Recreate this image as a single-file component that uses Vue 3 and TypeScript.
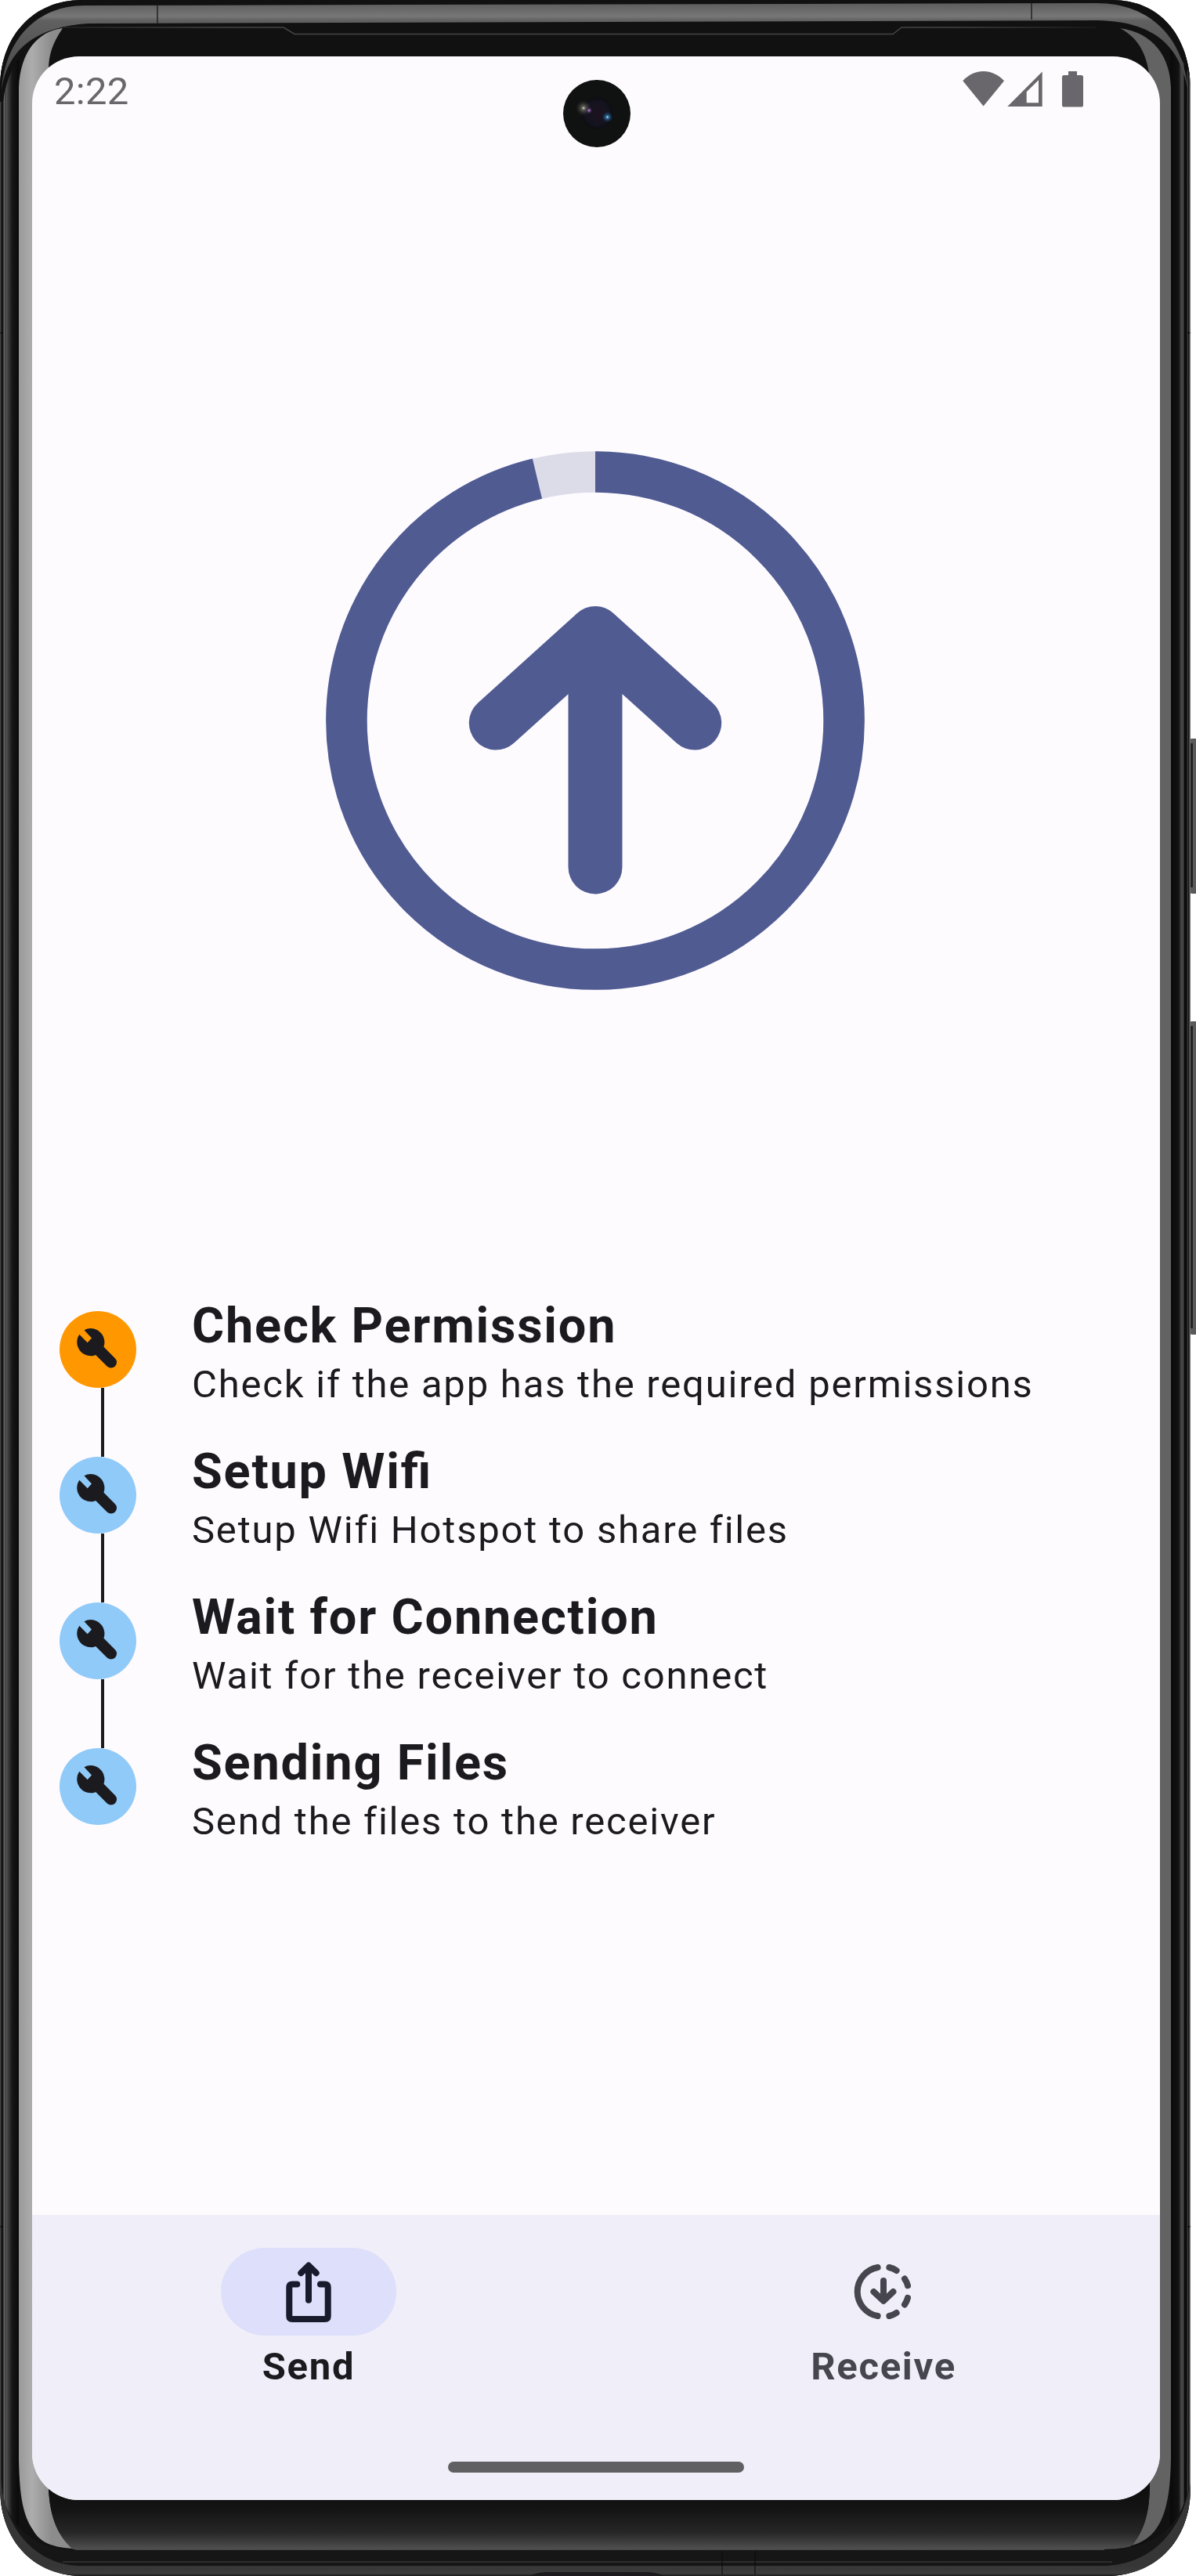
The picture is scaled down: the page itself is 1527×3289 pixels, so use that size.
<script setup lang="ts">
interface Step {
  title: string
  detail: string
  active: boolean
}

const steps: Step[] = [
  { title: 'Check Permission', detail: 'Check if the app has the required permissions', active: true },
  { title: 'Setup Wifi', detail: 'Setup Wifi Hotspot to share files', active: false },
  { title: 'Wait for Connection', detail: 'Wait for the receiver to connect', active: false },
  { title: 'Sending Files', detail: 'Send the files to the receiver', active: false },
]
</script>

<template>
  <div class="device">
    <svg class="frame" width="1527" height="3289" viewBox="0 0 1527 3289" aria-hidden="true">
      <defs>
        <linearGradient id="metal" x1="0" y1="0" x2="0" y2="1">
          <stop offset="0" stop-color="#5c5c5c" />
          <stop offset="0.15" stop-color="#777" />
          <stop offset="0.2" stop-color="#606060" />
          <stop offset="1" stop-color="#444" />
        </linearGradient>
        <linearGradient id="leftSide" gradientUnits="userSpaceOnUse" x1="0" y1="0" x2="24" y2="0">
          <stop offset="0" stop-color="#555" />
          <stop offset="0.08" stop-color="#151515" />
          <stop offset="0.17" stop-color="#151515" />
          <stop offset="0.22" stop-color="#808080" />
          <stop offset="0.27" stop-color="#333" />
          <stop offset="0.31" stop-color="#555" />
          <stop offset="0.65" stop-color="#161616" />
          <stop offset="1" stop-color="#0a0a0a" />
        </linearGradient>
        <linearGradient id="rightSide" gradientUnits="userSpaceOnUse" x1="1494" y1="0" x2="1520" y2="0">
          <stop offset="0" stop-color="#0a0a0a" />
          <stop offset="0.42" stop-color="#121212" />
          <stop offset="0.55" stop-color="#484848" />
          <stop offset="0.66" stop-color="#404040" />
          <stop offset="0.7" stop-color="#080808" />
          <stop offset="0.82" stop-color="#111" />
          <stop offset="0.86" stop-color="#444" />
          <stop offset="0.9" stop-color="#111" />
          <stop offset="0.96" stop-color="#555" />
          <stop offset="1" stop-color="#888" />
        </linearGradient>
        <linearGradient id="glassLeft" gradientUnits="userSpaceOnUse" x1="24" y1="0" x2="66" y2="0">
          <stop offset="0" stop-color="#999" />
          <stop offset="0.4" stop-color="#adadad" />
          <stop offset="1" stop-color="#8c8c8c" />
        </linearGradient>
        <linearGradient id="chin" x1="0" y1="0" x2="0" y2="1">
          <stop offset="0" stop-color="#0d0d0d" />
          <stop offset="0.4" stop-color="#141414" />
          <stop offset="0.75" stop-color="#272727" />
          <stop offset="1" stop-color="#505050" />
        </linearGradient>
        <linearGradient id="rim" gradientUnits="userSpaceOnUse" x1="0" y1="3276" x2="0" y2="3289">
          <stop offset="0" stop-color="#363636" />
          <stop offset="0.75" stop-color="#3c3c3c" />
          <stop offset="1" stop-color="#1a1a1a" />
        </linearGradient>
        <linearGradient id="notchLine" gradientUnits="userSpaceOnUse" x1="80" y1="0" x2="1420" y2="0">
          <stop offset="0" stop-color="#222" />
          <stop offset="0.15" stop-color="#444" />
          <stop offset="0.85" stop-color="#444" />
          <stop offset="1" stop-color="#151515" />
        </linearGradient>
        <clipPath id="body">
          <path d="M0 108C2 44 44 0 104 0H1420C1480 0 1518 44 1520 112V3180C1518 3246 1474 3289 1412 3289H106C44 3289 2 3246 0 3180Z" />
        </clipPath>
      </defs>

      <g>
        <rect x="1516" y="916" width="20" height="116" rx="5" fill="none" />
        <rect x="1517" y="943" width="14" height="198" rx="5" fill="#5a5a5a" />
        <rect x="1518" y="949" width="5" height="184" fill="#222" />
        <rect x="1517" y="1304" width="14" height="400" rx="5" fill="#5a5a5a" />
        <rect x="1518" y="1310" width="5" height="386" fill="#222" />
      </g>

      <g clip-path="url(#body)">
        <rect width="1527" height="3289" fill="#111" />
        <rect y="0" width="24" height="3289" fill="url(#leftSide)" />
        <rect x="1494" y="0" width="33" height="3289" fill="url(#rightSide)" />
        <path d="M0 0H1527V130C1518 60 1476 33 1400 33H120C52 34 12 66 4 130L0 130Z" fill="#111" />
        <path d="M2 116C6 52 46 7 108 7L1400 4C1470 4 1512 50 1517 116C1506 52 1466 26 1396 26L112 30C52 34 10 58 2 116Z" fill="url(#metal)" />
        <path d="M201 6V30M1317 4V25" stroke="#222" stroke-width="1.5" />
        <path d="M80 35H362L376 43.500H1140L1151 35H1400" fill="none" stroke="url(#notchLine)" stroke-width="1.500" />
        <path d="M24 112C26 66 48 40 80 36C67 55 62 70 62 90V3178C64 3215 74 3238 93 3254C62 3252 50 3244 42 3230C30 3212 25 3190 24 3140Z" fill="url(#glassLeft)" />
        <path d="M1430 36C1474 42 1494 74 1495 112V3140C1494 3200 1484 3240 1445 3250C1462 3230 1468 3206 1468 3170V100C1464 66 1452 48 1430 36Z" fill="#636363" />
        <path d="M62 3170H1468C1468 3206 1462 3230 1444 3251C1434 3254 1420 3255 1400 3255H93C74 3238 64 3215 62 3178Z" fill="url(#chin)" />
        <path d="M3 3180C8 3225 46 3256 96 3256H1410C1460 3256 1505 3236 1516 3180L1527 3289H0Z" fill="#161616" />
        <path d="M1 3165C6 3234 50 3276 104 3276H1408C1462 3276 1508 3240 1520 3170V3289H0Z" fill="url(#rim)" />
        <path d="M96 3255.500H1410M80 3271H1420" stroke="#444" fill="none" />
        <path d="M922 3257V3287M964 3257V3287M0 425H4M1516 425H1520M0 2843H4M1516 2843H1520" stroke="#080808" />
        <path d="M676 3289Q686 3284 700 3284H826Q838 3284 848 3289Z" fill="#1b191c" />
      </g>
    </svg>

    <div class="screen">
      <header class="status">
        <span class="clock">2:22</span>
        <svg class="indicators" width="156" height="48" viewBox="1228 90 156 48">
          <path d="M1229.300 103.300C1244 87 1267 87 1282 103.300L1255.600 135.500Z" />
          <path fill-rule="evenodd" d="M1286.300 136L1330.700 91.500V136ZM1310.700 117.300V131.200H1326V102.200Z" />
          <path d="M1364 91H1375V96H1380.500Q1383 96 1383 98.500V134Q1383 136.600 1380.500 136.600H1358.500Q1356 136.600 1356 134V98.500Q1356 96 1358.500 96H1364Z" />
        </svg>
      </header>

      <svg class="camera" width="88" height="88" viewBox="0 0 88 88" aria-hidden="true">
        <defs>
          <radialGradient id="lens">
            <stop offset="0" stop-color="#1b121d" />
            <stop offset="0.7" stop-color="#151320" />
            <stop offset="1" stop-color="#0c0e10" />
          </radialGradient>
          <radialGradient id="glintWarm">
            <stop offset="0" stop-color="#d8dccb" />
            <stop offset="0.25" stop-color="#77796b" stop-opacity="0.7" />
            <stop offset="1" stop-color="#333" stop-opacity="0" />
          </radialGradient>
          <radialGradient id="glintBlue">
            <stop offset="0" stop-color="#bfe6ff" />
            <stop offset="0.25" stop-color="#2c6c9c" />
            <stop offset="1" stop-color="#123" stop-opacity="0" />
          </radialGradient>
          <radialGradient id="glintPink">
            <stop offset="0" stop-color="#c8a0c8" />
            <stop offset="0.4" stop-color="#5a3a70" />
            <stop offset="1" stop-color="#224" stop-opacity="0" />
          </radialGradient>
        </defs>
        <circle cx="44" cy="44" r="43" fill="#101211" />
        <circle cx="44.500" cy="43.500" r="20.500" fill="url(#lens)" />
        <circle cx="27" cy="37" r="10" fill="url(#glintWarm)" />
        <circle cx="34" cy="40" r="4.500" fill="url(#glintPink)" />
        <circle cx="57.500" cy="48.500" r="7.500" fill="url(#glintBlue)" />
      </svg>

      <main class="content">
        <svg class="progress" width="688" height="688" viewBox="0 0 688 688">
          <circle cx="344" cy="344" r="317.600" class="track" />
          <circle cx="344" cy="344" r="317.600" class="value" pathLength="360" stroke-dasharray="346.500 13.500" transform="rotate(-90 344 344)" />
          <path class="arrow" d="M217.300 347L344 232.500L470.700 347M344 232.500V531" />
        </svg>

        <ol class="steps">
          <li v-for="step in steps" :key="step.title" class="step">
            <div class="rail">
              <span class="badge" :class="{ active: step.active }">
                <svg width="52" height="52" viewBox="0 0 52 52">
                  <path class="head" d="M9.500 3.200A17.600 17.600 0 1 1 3.300 8.800L13.700 19.200L19 13.500Z" />
                  <path class="handle" d="M22 22.500L43.800 44.300" />
                </svg>
              </span>
            </div>
            <div class="copy">
              <h2>{{ step.title }}</h2>
              <p>{{ step.detail }}</p>
            </div>
          </li>
        </ol>
      </main>

      <nav class="nav">
        <div class="tabs">
          <a class="tab selected">
            <span class="pill">
              <svg width="84" height="84" viewBox="0 0 84 84">
                <path d="M27.300 32.400H21.300Q17.300 32.400 17.300 36.400V73Q17.300 77 21.300 77H62.700Q66.700 77 66.700 73V36.400Q66.700 32.400 62.700 32.400H57M42 52.700V9M32.300 18.200L42 8.600L51.700 18.200" />
              </svg>
            </span>
            <span>Send</span>
          </a>
          <a class="tab">
            <span class="pill">
              <svg width="84" height="84" viewBox="0 0 84 84">
                <path d="M34.600 11A31.500 31.500 0 0 0 34.600 73M49.400 11Q54.500 12.200 58.600 15M69 25.500Q72 30 73 34.200M73 49.800Q72 54 69 58.500M49.400 73Q54.500 71.800 58.600 69M42 28V53M29.400 42L42 53.800L54.400 42" />
              </svg>
            </span>
            <span>Receive</span>
          </a>
        </div>
        <div class="home"></div>
      </nav>
    </div>
  </div>
</template>

<style>
body {
  margin: 0;
  background: #fff;
}
</style>

<style scoped>
.device {
  position: relative;
  box-sizing: border-box;
  width: 1527px;
  height: 3289px;
  padding: 72px 46px 97px 41px;
  overflow: hidden;
  font-family: Roboto, sans-serif;
}
.frame {
  position: absolute;
  inset: 0;
}
.screen {
  position: relative;
  display: flex;
  flex-direction: column;
  width: 1440px;
  height: 3120px;
  border-radius: 60px;
  overflow: hidden;
  background: #fefbff;
  color: #1b1b1f;
}
.status {
  display: flex;
  justify-content: space-between;
  height: 112px;
  padding: 0 97px 0 28px;
  color: #69676b;
}
.clock {
  margin-top: 16px;
  font-size: 49px;
  line-height: 58px;
  letter-spacing: 0.3px;
}
.indicators {
  margin-top: 18px;
  fill: currentColor;
}
.camera {
  position: absolute;
  left: 676.5px;
  top: 28.5px;
}
.content {
  flex: 1;
  display: flex;
  flex-direction: column;
  align-items: center;
}
.progress {
  margin: 392px 2px 0 0;
  fill: none;
}
.track {
  stroke: #dcdce9;
  stroke-width: 52.500px;
}
.value {
  stroke: #505b92;
  stroke-width: 52.500px;
}
.arrow {
  stroke: #505b92;
  stroke-width: 69px;
  stroke-linecap: round;
  stroke-linejoin: round;
}
.steps {
  align-self: stretch;
  margin: 391px 0 0;
  padding: 0 0 0 35px;
  list-style: none;
}
.step {
  display: flex;
  height: 186px;
}
.rail {
  display: flex;
  flex-direction: column;
  width: 98px;
  padding-top: 19px;
}
.rail::after {
  content: '';
  flex: 1;
  width: 4px;
  margin: 0 0 -19px 53px;
  background: #1b1b1b;
}
.step:last-child .rail::after {
  display: none;
}
.badge {
  display: grid;
  place-items: center;
  width: 98px;
  height: 98px;
  border-radius: 50%;
  background: #90caf9;
}
.badge svg {
  margin: -4px 0 0 -2px;
}
.badge.active {
  background: #ff9800;
}
.head {
  fill: #1b1b1f;
}
.handle {
  stroke: #1b1b1f;
  stroke-width: 14.500px;
  stroke-linecap: round;
}
.copy {
  margin: 1px 0 0 71px;
}
h2 {
  margin: 0;
  font-size: 63px;
  font-weight: 700;
  line-height: 74px;
  letter-spacing: 1.800px;
  font-feature-settings: 'liga' 1;
}
p {
  margin: 9px 0 0;
  font-size: 49px;
  line-height: 57px;
  letter-spacing: 1.780px;
}
.nav {
  display: flex;
  flex-direction: column;
  justify-content: space-between;
  align-items: center;
  height: 364px;
  background: #f0eef8;
}
.tabs {
  display: flex;
  gap: 28px;
  align-self: stretch;
}
.tab {
  flex: 1;
  display: flex;
  flex-direction: column;
  align-items: center;
  padding-top: 42px;
  color: #46464f;
  font-size: 49px;
  font-weight: 700;
  line-height: 58px;
  letter-spacing: 1.700px;
}
.pill {
  display: grid;
  place-items: center;
  width: 224px;
  height: 112px;
  margin-bottom: 11px;
  border-radius: 56px;
}
.pill svg {
  fill: none;
  stroke: #46464f;
  stroke-width: 8px;
  stroke-linecap: round;
  stroke-linejoin: round;
}
.selected {
  color: #1b1b1f;
}
.selected .pill {
  background: #dee0fb;
}
.selected .pill svg {
  stroke: #171b2c;
}
.home {
  width: 378px;
  height: 14px;
  margin-bottom: 35px;
  border-radius: 7px;
  background: #606062;
}
</style>
